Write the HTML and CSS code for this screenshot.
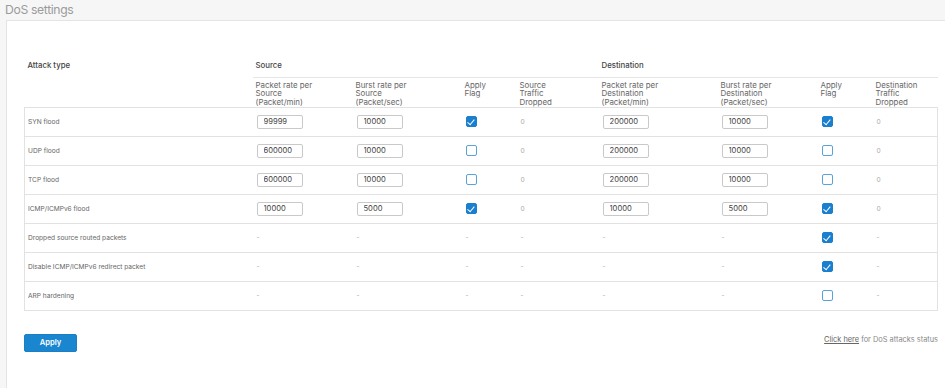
FILE: index.html
```html
<!DOCTYPE html>
<html lang="en">
<head>
<meta charset="utf-8">
<title>DoS settings</title>
<link rel="stylesheet" href="styles.css">
</head>
<body>
<div class="page">
  <h1 class="title">DoS settings</h1>
  <div class="panel">
    <table class="dos">
      <colgroup>
        <col style="width:228px"><col style="width:100px"><col style="width:109px"><col style="width:55px"><col style="width:82px"><col style="width:119px"><col style="width:100px"><col style="width:55px"><col style="width:65px">
      </colgroup>
      <thead>
        <tr class="h1">
          <th rowspan="2" class="att">Attack type</th>
          <th colspan="4" class="grp">Source</th>
          <th colspan="4" class="grp">Destination</th>
        </tr>
        <tr class="h2">
          <th>Packet rate per<br>Source<br>(Packet/min)</th>
          <th>Burst rate per<br>Source<br>(Packet/sec)</th>
          <th>Apply<br>Flag</th>
          <th>Source<br>Traffic<br>Dropped</th>
          <th>Packet rate per<br>Destination<br>(Packet/min)</th>
          <th>Burst rate per<br>Destination<br>(Packet/sec)</th>
          <th>Apply<br>Flag</th>
          <th>Destination<br>Traffic<br>Dropped</th>
        </tr>
      </thead>
      <tbody>
        <tr>
          <td class="first">SYN flood</td>
          <td><input class="num" type="text" value="99999"></td>
          <td><input class="num" type="text" value="10000"></td>
          <td><span class="cb on"></span></td>
          <td class="zero">0</td>
          <td><input class="num" type="text" value="200000"></td>
          <td><input class="num" type="text" value="10000"></td>
          <td><span class="cb on"></span></td>
          <td class="zero last">0</td>
        </tr>
        <tr>
          <td class="first">UDP flood</td>
          <td><input class="num" type="text" value="600000"></td>
          <td><input class="num" type="text" value="10000"></td>
          <td><span class="cb"></span></td>
          <td class="zero">0</td>
          <td><input class="num" type="text" value="200000"></td>
          <td><input class="num" type="text" value="10000"></td>
          <td><span class="cb"></span></td>
          <td class="zero last">0</td>
        </tr>
        <tr>
          <td class="first">TCP flood</td>
          <td><input class="num" type="text" value="600000"></td>
          <td><input class="num" type="text" value="10000"></td>
          <td><span class="cb"></span></td>
          <td class="zero">0</td>
          <td><input class="num" type="text" value="200000"></td>
          <td><input class="num" type="text" value="10000"></td>
          <td><span class="cb"></span></td>
          <td class="zero last">0</td>
        </tr>
        <tr>
          <td class="first">ICMP/ICMPv6 flood</td>
          <td><input class="num" type="text" value="10000"></td>
          <td><input class="num" type="text" value="5000"></td>
          <td><span class="cb on"></span></td>
          <td class="zero">0</td>
          <td><input class="num" type="text" value="10000"></td>
          <td><input class="num" type="text" value="5000"></td>
          <td><span class="cb on"></span></td>
          <td class="zero last">0</td>
        </tr>
        <tr>
          <td class="first">Dropped source routed packets</td>
          <td class="dash">-</td><td class="dash">-</td><td class="dash">-</td><td class="dash">-</td>
          <td class="dash">-</td><td class="dash">-</td>
          <td><span class="cb on"></span></td>
          <td class="dash last">-</td>
        </tr>
        <tr>
          <td class="first">Disable ICMP/ICMPv6 redirect packet</td>
          <td class="dash">-</td><td class="dash">-</td><td class="dash">-</td><td class="dash">-</td>
          <td class="dash">-</td><td class="dash">-</td>
          <td><span class="cb on"></span></td>
          <td class="dash last">-</td>
        </tr>
        <tr>
          <td class="first">ARP hardening</td>
          <td class="dash">-</td><td class="dash">-</td><td class="dash">-</td><td class="dash">-</td>
          <td class="dash">-</td><td class="dash">-</td>
          <td><span class="cb"></span></td>
          <td class="dash last">-</td>
        </tr>
      </tbody>
    </table>
    <div class="footer">
      <button class="apply" type="button">Apply</button>
      <p class="status"><a href="#">Click here</a> for DoS attacks status</p>
    </div>
  </div>
</div>
</body>
</html>
```

FILE: styles.css
```css
* { box-sizing: border-box; }
html, body {
  margin: 0;
  padding: 0;
  background: #f6f6f6;
  overflow: hidden;
}
body {
  font-family: Inter, "Noto Sans", "Liberation Sans", sans-serif;
  color: #555;
}
.page {
  width: 945px;
  height: 388px;
  overflow: hidden;
}
.title {
  margin: 0;
  padding: 1px 0 0 5px;
  height: 20px;
  font-size: 12.2px;
  line-height: 17px;
  font-weight: 400;
  letter-spacing: -0.35px;
  color: #9b9b9b;
}
.panel {
  margin-left: 6px;
  width: 960px;
  height: 400px;
  background: #fff;
  border: 1px solid #e4e4e4;
  padding: 36px 0 0 17px;
}
.dos {
  width: 913px;
  table-layout: fixed;
  border-collapse: collapse;
}
.dos th {
  text-align: left;
  vertical-align: top;
  font-weight: 500;
  color: #555;
  padding: 0 3px;
}
.h1 th {
  height: 20px;
  padding-top: 4px;
  line-height: 8px;
  font-size: 7.8px;
  color: #444;
}
.h1 .grp { border-bottom: 1px solid #e6e6e6; }
.h2 th {
  height: 30px;
  line-height: 8.5px;
  padding-top: 3px;
  font-size: 7.9px;
  font-weight: 400;
  color: #666;
}
.dos tbody tr {
  height: 29px;
  border-top: 1px solid #e2e2e2;
  border-bottom: 1px solid #e2e2e2;
}
.dos td {
  padding: 0 3px;
  vertical-align: middle;
  font-size: 6.6px;
  color: #666;
}
.dos td.first {
  border-left: 1px solid #e2e2e2;
  padding-left: 3px;
}
.dos td.last { border-right: 1px solid #e2e2e2; }
.dos td.zero, .dos td.dash { color: #aaa; padding-left: 4px; }
.num {
  display: block;
  width: 46px;
  height: 14px;
  margin: 0 0 0 1px;
  padding: 0 0 0 6px;
  border: 1px solid #c9c9c9;
  border-radius: 2px;
  font-family: Inter, "Noto Sans", sans-serif;
  font-size: 7.6px;
  color: #444;
  background: #fff;
  outline: none;
}
.cb {
  display: block;
  width: 11px;
  height: 11px;
  margin-left: 1px;
  border: 1.3px solid #5aa2da;
  border-radius: 2px;
  background: #fff;
  position: relative;
}
.cb.on {
  background: #1b7fcf;
  border-color: #1b7fcf;
}
.cb.on::after {
  content: "";
  position: absolute;
  left: 2.4px;
  top: 1.2px;
  width: 3.4px;
  height: 5.6px;
  border-right: 1.8px solid #fff;
  border-bottom: 1.8px solid #fff;
  transform: rotate(40deg);
}
.footer {
  width: 914px;
  display: flex;
  justify-content: space-between;
  align-items: flex-start;
  margin-top: 23px;
}
.apply {
  width: 53px;
  height: 18px;
  background: #1a86d0;
  border: 1px solid #1a7fc6;
  border-radius: 2px;
  color: #fff;
  font-family: Inter, "Noto Sans", sans-serif;
  font-weight: 600;
  font-size: 7.6px;
  padding: 0;
}
.status {
  margin: 0;
  padding-top: 1px;
  font-size: 7.4px;
  line-height: 10px;
  color: #888;
}
.status a {
  color: #666;
  text-decoration: underline;
}
```
